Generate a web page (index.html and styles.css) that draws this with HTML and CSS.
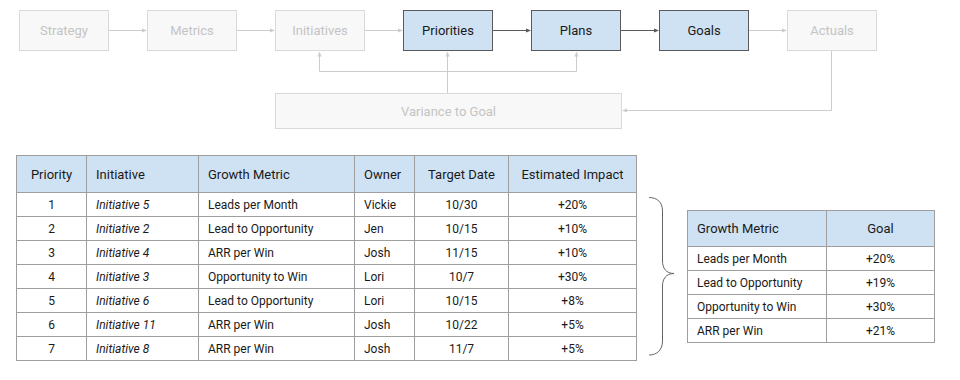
FILE: index.html
```html
<!DOCTYPE html>
<html>
<head>
<meta charset="utf-8">
<link rel="stylesheet" href="styles.css">
</head>
<body>
<div class="diagram">
  <div class="flow">
    <div class="node muted">Strategy</div>
    <div class="node muted">Metrics</div>
    <div class="node muted">Initiatives</div>
    <div class="node active">Priorities</div>
    <div class="node active">Plans</div>
    <div class="node active">Goals</div>
    <div class="node muted">Actuals</div>
  </div>
  <div class="feedback">
    <div class="node muted wide">Variance to Goal</div>
  </div>
  <svg class="links" width="960" height="140" viewBox="0 0 960 140">
    <g stroke="#cccccc" stroke-width="1" fill="none">
      <path d="M109 30.5H144"/>
      <path d="M237 30.5H272"/>
      <path d="M365 30.5H400"/>
      <path d="M749 30.5H784"/>
      <path d="M831.5 51V110.5H625"/>
      <path d="M447.5 93V55"/>
      <path d="M319.5 55V71.5H576.5V55"/>
    </g>
    <g stroke="#595959" stroke-width="1" fill="none">
      <path d="M493 30.5H528"/>
      <path d="M621 30.5H656"/>
    </g>
    <g fill="#cccccc">
      <polygon points="147,30.5 142,28.5 142,32.5"/>
      <polygon points="275,30.5 270,28.5 270,32.5"/>
      <polygon points="403,30.5 398,28.5 398,32.5"/>
      <polygon points="787,30.5 782,28.5 782,32.5"/>
      <polygon points="622,110.5 627,108.5 627,112.5"/>
      <polygon points="447.5,51.5 445.5,56.5 449.5,56.5"/>
      <polygon points="319.5,51.5 317.5,56.5 321.5,56.5"/>
      <polygon points="576.5,51.5 574.5,56.5 578.5,56.5"/>
    </g>
    <g fill="#595959">
      <polygon points="531,30.5 526,28.5 526,32.5"/>
      <polygon points="659,30.5 654,28.5 654,32.5"/>
    </g>
  </svg>
</div>

<div class="lower">
  <table class="grid main">
    <colgroup>
      <col style="width:70px"><col style="width:112px"><col style="width:156px">
      <col style="width:60px"><col style="width:94px"><col style="width:128px">
    </colgroup>
    <thead>
      <tr><th class="c">Priority</th><th>Initiative</th><th>Growth Metric</th><th>Owner</th><th class="c">Target Date</th><th class="c">Estimated Impact</th></tr>
    </thead>
    <tbody>
      <tr><td class="c">1</td><td class="i">Initiative 5</td><td>Leads per Month</td><td>Vickie</td><td class="c">10/30</td><td class="c">+20%</td></tr>
      <tr><td class="c">2</td><td class="i">Initiative 2</td><td>Lead to Opportunity</td><td>Jen</td><td class="c">10/15</td><td class="c">+10%</td></tr>
      <tr><td class="c">3</td><td class="i">Initiative 4</td><td>ARR per Win</td><td>Josh</td><td class="c">11/15</td><td class="c">+10%</td></tr>
      <tr><td class="c">4</td><td class="i">Initiative 3</td><td>Opportunity to Win</td><td>Lori</td><td class="c">10/7</td><td class="c">+30%</td></tr>
      <tr><td class="c">5</td><td class="i">Initiative 6</td><td>Lead to Opportunity</td><td>Lori</td><td class="c">10/15</td><td class="c">+8%</td></tr>
      <tr><td class="c">6</td><td class="i">Initiative 11</td><td>ARR per Win</td><td>Josh</td><td class="c">10/22</td><td class="c">+5%</td></tr>
      <tr><td class="c">7</td><td class="i">Initiative 8</td><td>ARR per Win</td><td>Josh</td><td class="c">11/7</td><td class="c">+5%</td></tr>
    </tbody>
  </table>

  <svg class="brace" width="50" height="205" viewBox="0 0 50 205">
    <path d="M12 42.5C20 42.5 25.5 47 25.5 56V106C25.5 113 29 118.5 37 118.5C29 118.5 25.5 124 25.5 131V186C25.5 195 20 200 12 200" stroke="#666666" stroke-width="1" fill="none"/>
  </svg>

  <table class="grid goals">
    <colgroup><col style="width:139px"><col style="width:108px"></colgroup>
    <thead>
      <tr><th>Growth Metric</th><th class="c">Goal</th></tr>
    </thead>
    <tbody>
      <tr><td>Leads per Month</td><td class="c">+20%</td></tr>
      <tr><td>Lead to Opportunity</td><td class="c">+19%</td></tr>
      <tr><td>Opportunity to Win</td><td class="c">+30%</td></tr>
      <tr><td>ARR per Win</td><td class="c">+21%</td></tr>
    </tbody>
  </table>
</div>
</body>
</html>
```

FILE: styles.css
```css
* { box-sizing: border-box; }

body {
  margin: 0;
  font-family: Roboto, "Liberation Sans", sans-serif;
  color: #1a1a1a;
  background: #ffffff;
}

.diagram {
  position: relative;
  height: 128px;
  padding: 10px 0 0 19px;
}

.flow {
  display: flex;
  gap: 38px;
}

.node {
  width: 90px;
  height: 41px;
  display: flex;
  align-items: center;
  justify-content: center;
  font-size: 13px;
  border: 1px solid;
}

.node.muted {
  background: #f8f8f8;
  border-color: #d9d9d9;
  color: #c4c4c4;
}

.node.active {
  background: #cfe2f3;
  border-color: #595959;
  color: #1a1a1a;
}

.feedback {
  margin: 42px 0 0 256px;
}

.node.wide {
  width: 347px;
  height: 36px;
}

.links {
  position: absolute;
  left: 0;
  top: 0;
}

.lower {
  display: flex;
  align-items: flex-start;
  padding-left: 16px;
  margin-top: 27px;
}

.grid {
  border-collapse: collapse;
  table-layout: fixed;
  font-size: 12px;
  color: #1a1a1a;
}

.grid th,
.grid td {
  border: 1px solid #9e9e9e;
  padding: 0 9px;
  text-align: left;
  white-space: nowrap;
}

.grid th {
  background: #cfe2f3;
  font-weight: normal;
  font-size: 13px;
  height: 37px;
}

.grid td {
  height: 24px;
}

.grid .c { text-align: center; }
.grid .i { font-style: italic; }

.main { width: 621px; }

.brace {
  flex: none;
  display: block;
}

.goals {
  width: 248px;
  margin-top: 55px;
}

.goals th { height: 36px; }
```
